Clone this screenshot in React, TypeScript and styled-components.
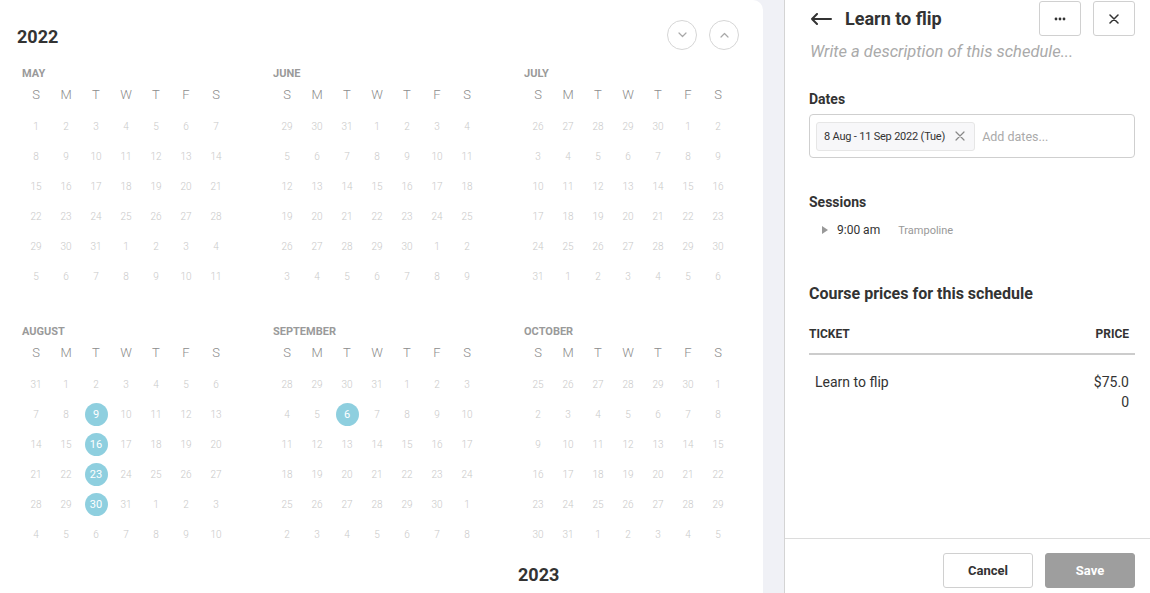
import React from "react";
import styled, { createGlobalStyle } from "styled-components";

const GlobalStyle = createGlobalStyle`
  html, body { margin: 0; padding: 0; height: 100%; overflow: hidden; background: #f0f1f6; }
  body { font-family: Roboto, "Noto Sans", Arial, sans-serif; color: #333; -webkit-font-smoothing: antialiased; }
  * { box-sizing: border-box; }
  #root { height: 100%; }
`;

const Page = styled.div`
  display: flex;
  height: 100vh;
  width: 100%;
`;

const CalendarPane = styled.div`
  width: 763px;
  flex-shrink: 0;
  margin-right: 21px;
  background: #fff;
  border-top-right-radius: 10px;
  overflow: hidden;
`;

const YearHeader = styled.div`
  display: flex;
  align-items: center;
  justify-content: space-between;
  height: 30px;
  margin-top: 20px;
  padding: 0 24px 0 17px;
`;

const YearTitle = styled.div<{ $indent?: number }>`
  font-size: 18px;
  line-height: 22px;
  font-weight: 700;
  color: #333;
  margin-top: 4px;
  padding-left: ${(p) => p.$indent ?? 0}px;
`;

const NavGroup = styled.div`
  display: flex;
  gap: 12px;
`;

const NavButton = styled.button`
  width: 30px;
  height: 30px;
  border-radius: 50%;
  border: 1px solid #d6d6d6;
  background: #fff;
  display: flex;
  align-items: center;
  justify-content: center;
  padding: 0;
  cursor: pointer;
`;

const MonthGrid = styled.div`
  display: grid;
  grid-template-columns: repeat(3, 251px);
  row-gap: 34px;
  padding-left: 21px;
  margin-top: 17px;
`;

const MonthBlock = styled.div`
  display: flex;
  flex-direction: column;
`;

const MonthLabel = styled.div`
  font-size: 11px;
  line-height: 12px;
  font-weight: 700;
  color: #9a9a9a;
  text-transform: uppercase;
  padding-left: 1px;
  padding-top: 1px;
  height: 12px;
`;

const WeekRow = styled.div`
  display: grid;
  grid-template-columns: repeat(7, 30px);
  margin-top: 5px;
  height: 20px;
`;

const WeekDay = styled.div`
  display: flex;
  align-items: center;
  justify-content: center;
  font-size: 13px;
  font-weight: 300;
  color: #8c8c8c;
`;

const DayGrid = styled.div`
  display: grid;
  grid-template-columns: repeat(7, 30px);
  grid-auto-rows: 30px;
  margin-top: 7px;
`;

const DayCell = styled.div`
  display: flex;
  align-items: center;
  justify-content: center;
`;

const DayNum = styled.span<{ $active?: boolean }>`
  width: 23px;
  height: 23px;
  border-radius: 50%;
  display: flex;
  align-items: center;
  justify-content: center;
  font-size: ${(p) => (p.$active ? 11 : 10)}px;
  font-weight: ${(p) => (p.$active ? 400 : 300)};
  color: ${(p) => (p.$active ? "#fff" : "#c9c9c9")};
  background: ${(p) => (p.$active ? "#8ecfdf" : "transparent")};
`;

const NextYear = styled.div`
  margin-top: 15px;
`;

/* Right panel */
const Panel = styled.aside`
  width: 366px;
  flex-shrink: 0;
  background: #fff;
  border-left: 1px solid #d4d4d4;
  display: flex;
  flex-direction: column;
  height: 100%;
`;

const PanelBody = styled.div`
  flex: 1;
  padding: 0 15px 0 24px;
  overflow: hidden;
`;

const PanelHeader = styled.div`
  display: flex;
  align-items: center;
  height: 35px;
  margin-top: 1px;
`;

const BackIcon = styled.span`
  display: flex;
  margin-left: 1px;
  margin-right: 13px;
`;

const Title = styled.h1`
  flex: 1;
  margin: 0;
  font-size: 18px;
  line-height: 22px;
  font-weight: 700;
  color: #333;
`;

const IconButton = styled.button`
  width: 42px;
  height: 35px;
  border: 1px solid #d0d0d0;
  border-radius: 3px;
  background: #fff;
  display: flex;
  align-items: center;
  justify-content: center;
  padding: 0;
  margin-left: 12px;
  cursor: pointer;
`;

const Description = styled.div`
  margin-top: 5px;
  font-size: 16.5px;
  line-height: 21px;
  font-style: italic;
  color: #aaa;
  padding-left: 1px;
`;

const SectionLabel = styled.div<{ $gap: number }>`
  margin-top: ${(p) => p.$gap}px;
  font-size: 14px;
  line-height: 18px;
  font-weight: 700;
  color: #333;
`;

const DateInput = styled.div`
  margin-top: 6px;
  height: 44px;
  border: 1px solid #cfcfcf;
  border-radius: 4px;
  display: flex;
  align-items: center;
  padding: 0 6px;
  gap: 7px;
`;

const Chip = styled.div`
  height: 29px;
  display: flex;
  align-items: center;
  gap: 10px;
  padding: 0 9px 0 7px;
  background: #f7f7f9;
  border: 1px solid #e6e6e6;
  border-radius: 3px;
  font-size: 11px;
  letter-spacing: -0.2px;
  color: #333;
`;

const Placeholder = styled.span`
  font-size: 12.5px;
  color: #aaa;
`;

const SessionRow = styled.div`
  margin-top: 11px;
  display: flex;
  align-items: center;
  padding-left: 13px;
  height: 16px;
`;

const SessionTime = styled.span`
  margin-left: 9px;
  font-size: 12px;
  color: #333;
`;

const SessionPlace = styled.span`
  margin-left: 18px;
  font-size: 11px;
  color: #999;
`;

const PricesTitle = styled.h2`
  margin: 46px 0 0;
  font-size: 16px;
  line-height: 20px;
  font-weight: 700;
  color: #333;
`;

const Table = styled.table`
  width: 100%;
  margin-top: 22px;
  border-collapse: collapse;
`;

const Th = styled.th<{ $right?: boolean }>`
  text-align: ${(p) => (p.$right ? "right" : "left")};
  font-size: 12px;
  line-height: 16px;
  font-weight: 700;
  color: #333;
  padding: 0 ${(p) => (p.$right ? 6 : 0)}px 11px 0;
  border-bottom: 2px solid #cccccc;
`;

const Td = styled.td<{ $price?: boolean }>`
  font-size: 14px;
  line-height: 20px;
  color: #333;
  vertical-align: top;
  padding: ${(p) => (p.$price ? "17px 6px 0 0" : "17px 0 0 6px")};
  text-align: ${(p) => (p.$price ? "right" : "left")};
  width: ${(p) => (p.$price ? "44px" : "auto")};
  word-break: ${(p) => (p.$price ? "break-all" : "normal")};
`;

const Footer = styled.div`
  height: 55px;
  flex-shrink: 0;
  border-top: 1px solid #dcdcdc;
  display: flex;
  justify-content: flex-end;
  align-items: flex-start;
  gap: 12px;
  padding: 14px 15px 0 0;
`;

const FooterButton = styled.button<{ $primary?: boolean }>`
  width: 90px;
  height: 35px;
  border-radius: 3px;
  font-family: inherit;
  font-size: 13px;
  font-weight: 700;
  cursor: pointer;
  border: 1px solid ${(p) => (p.$primary ? "#9e9e9e" : "#d0d0d0")};
  background: ${(p) => (p.$primary ? "#9e9e9e" : "#fff")};
  color: ${(p) => (p.$primary ? "#fff" : "#333")};
`;

const WEEK = ["S", "M", "T", "W", "T", "F", "S"];
const MONTHS = ["January", "February", "March", "April", "May", "June", "July", "August", "September", "October", "November", "December"];

const highlighted = new Set(["2022-7-9", "2022-7-16", "2022-7-23", "2022-7-30", "2022-8-6"]);

function buildMonth(y: number, m: number) {
  const first = new Date(y, m, 1);
  const start = new Date(y, m, 1 - first.getDay());
  return Array.from({ length: 42 }, (_, i) => {
    const d = new Date(start.getFullYear(), start.getMonth(), start.getDate() + i);
    const inMonth = d.getMonth() === m;
    return {
      day: d.getDate(),
      active: inMonth && highlighted.has(`${y}-${m}-${d.getDate()}`),
      key: `${d.getMonth()}-${d.getDate()}`,
    };
  });
}

const Month: React.FC<{ year: number; month: number }> = ({ year, month }) => {
  const days = buildMonth(year, month);
  return (
    <MonthBlock>
      <MonthLabel>{MONTHS[month]}</MonthLabel>
      <WeekRow>
        {WEEK.map((w, i) => (
          <WeekDay key={i}>{w}</WeekDay>
        ))}
      </WeekRow>
      <DayGrid>
        {days.map((d) => (
          <DayCell key={d.key}>
            <DayNum $active={d.active}>{d.day}</DayNum>
          </DayCell>
        ))}
      </DayGrid>
    </MonthBlock>
  );
};

const Chevron: React.FC<{ up?: boolean }> = ({ up }) => (
  <svg width="9" height="6" viewBox="0 0 9 6">
    <path d={up ? "M1 5 L4.5 1.5 L8 5" : "M1 1 L4.5 4.5 L8 1"} fill="none" stroke="#a8a8a8" strokeWidth="1.2" strokeLinecap="round" strokeLinejoin="round" />
  </svg>
);

const CloseGlyph: React.FC<{ size: number; color: string; w: number }> = ({ size, color, w }) => (
  <svg width={size} height={size} viewBox="0 0 10 10">
    <path d="M1 1 L9 9 M9 1 L1 9" stroke={color} strokeWidth={w} strokeLinecap="round" />
  </svg>
);

export default function App() {
  return (
    <>
      <GlobalStyle />
      <Page>
        <CalendarPane>
          <YearHeader>
            <YearTitle>2022</YearTitle>
            <NavGroup>
              <NavButton aria-label="Next">
                <Chevron />
              </NavButton>
              <NavButton aria-label="Previous">
                <Chevron up />
              </NavButton>
            </NavGroup>
          </YearHeader>
          <MonthGrid>
            {[4, 5, 6, 7, 8, 9].map((m) => (
              <Month key={m} year={2022} month={m} />
            ))}
          </MonthGrid>
          <NextYear>
            <YearTitle $indent={518}>2023</YearTitle>
          </NextYear>
        </CalendarPane>

        <Panel>
          <PanelBody>
            <PanelHeader>
              <BackIcon>
                <svg width="22" height="12" viewBox="0 0 22 12">
                  <path d="M21 6 H2 M7 1 L2 6 L7 11" fill="none" stroke="#333" strokeWidth="2" strokeLinecap="round" strokeLinejoin="round" />
                </svg>
              </BackIcon>
              <Title>Learn to flip</Title>
              <IconButton aria-label="More">
                <svg width="12" height="4" viewBox="0 0 12 4">
                  <circle cx="2" cy="2" r="1.4" fill="#333" />
                  <circle cx="6" cy="2" r="1.4" fill="#333" />
                  <circle cx="10" cy="2" r="1.4" fill="#333" />
                </svg>
              </IconButton>
              <IconButton aria-label="Close">
                <CloseGlyph size={10} color="#333" w={1.5} />
              </IconButton>
            </PanelHeader>
            <Description>Write a description of this schedule...</Description>

            <SectionLabel $gap={28}>Dates</SectionLabel>
            <DateInput>
              <Chip>
                <span>8 Aug - 11 Sep 2022 (Tue)</span>
                <CloseGlyph size={10} color="#888" w={1.2} />
              </Chip>
              <Placeholder>Add dates...</Placeholder>
            </DateInput>

            <SectionLabel $gap={35}>Sessions</SectionLabel>
            <SessionRow>
              <svg width="6" height="8" viewBox="0 0 6 8">
                <path d="M0 0 L6 4 L0 8 Z" fill="#999" />
              </svg>
              <SessionTime>9:00 am</SessionTime>
              <SessionPlace>Trampoline</SessionPlace>
            </SessionRow>

            <PricesTitle>Course prices for this schedule</PricesTitle>
            <Table>
              <thead>
                <tr>
                  <Th>TICKET</Th>
                  <Th $right>PRICE</Th>
                </tr>
              </thead>
              <tbody>
                <tr>
                  <Td>Learn to flip</Td>
                  <Td $price>$75.00</Td>
                </tr>
              </tbody>
            </Table>
          </PanelBody>
          <Footer>
            <FooterButton>Cancel</FooterButton>
            <FooterButton $primary>Save</FooterButton>
          </Footer>
        </Panel>
      </Page>
    </>
  );
}
